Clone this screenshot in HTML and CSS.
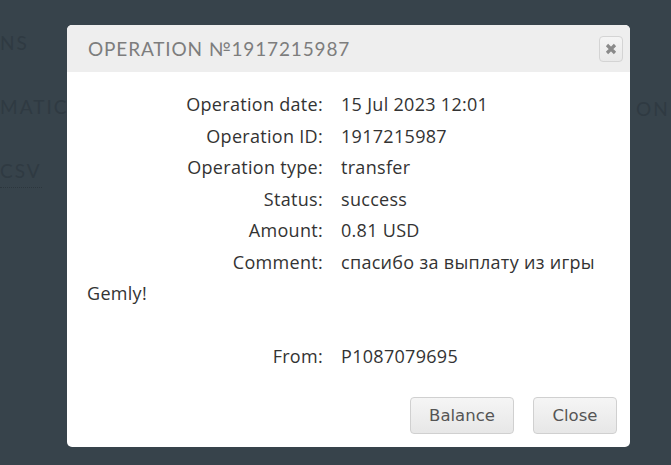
FILE: index.html
```html
<!DOCTYPE html>
<html>
<head>
<meta charset="utf-8">
<link rel="stylesheet" href="styles.css">
</head>
<body>
<div class="page">
  <div class="bg-nav">
    <div class="bg-item">NS</div>
    <div class="bg-item">MATIC</div>
    <div class="bg-item"><span class="bg-csv">CSV</span></div>
  </div>
  <div class="bg-right">ON</div>

  <div class="modal">
    <div class="modal-header">
      <h3 class="modal-title">OPERATION №1917215987</h3>
      <button class="close-x" aria-label="close">
        <svg width="12" height="12" viewBox="0 0 12 12"><path d="M2 2 L10 10 M10 2 L2 10" stroke="#8a8a8a" stroke-width="3.2" stroke-linecap="butt"/></svg>
      </button>
    </div>
    <div class="modal-body">
      <div class="row"><span class="label">Operation date:</span><span class="value">15 Jul 2023 12:01</span></div>
      <div class="row"><span class="label">Operation ID:</span><span class="value">1917215987</span></div>
      <div class="row"><span class="label">Operation type:</span><span class="value">transfer</span></div>
      <div class="row"><span class="label">Status:</span><span class="value">success</span></div>
      <div class="row"><span class="label">Amount:</span><span class="value">0.81 USD</span></div>
      <div class="row"><span class="label">Comment:</span>спасибо за выплату из игры Gemly!</div>
      <div class="row empty">&nbsp;</div>
      <div class="row"><span class="label">From:</span><span class="value">P1087079695</span></div>
    </div>
    <div class="modal-footer">
      <button class="btn btn-balance">Balance</button>
      <button class="btn btn-close">Close</button>
    </div>
  </div>
</div>
</body>
</html>
```

FILE: styles.css
```css
html, body {
  margin: 0;
  padding: 0;
}
body {
  background: #37434b;
  width: 671px;
  height: 465px;
  overflow: hidden;
  font-family: "Open Sans", "Liberation Sans", sans-serif;
}
.page {
  position: relative;
  width: 671px;
  height: 465px;
}
.bg-nav {
  padding-top: 33px;
  display: flex;
  flex-direction: column;
}
.bg-item {
  color: #2f3a42;
  font-family: "Lato", sans-serif;
  font-size: 19px;
  letter-spacing: 2px;
  height: 64px;
  line-height: 20px;
}
.bg-csv {
  border-bottom: 1px dotted #2c363d;
  padding-bottom: 5px;
}
.bg-right {
  position: absolute;
  left: 636px;
  top: 97px;
  color: #2f3a42;
  font-family: "Lato", sans-serif;
  font-size: 19px;
  letter-spacing: 2px;
}
.modal {
  position: absolute;
  left: 67px;
  top: 25px;
  width: 563px;
  height: 422px;
  background: #fff;
  border-radius: 5px;
  overflow: hidden;
  display: flex;
  flex-direction: column;
}
.modal-header {
  background: #eeeeee;
  height: 47px;
  display: flex;
  align-items: center;
  justify-content: space-between;
  padding: 0 7px 0 21px;
}
.modal-title {
  margin: 0;
  font-family: "Lato", sans-serif;
  font-weight: 400;
  font-size: 19px;
  letter-spacing: 0.85px;
  color: #7d7d7d;
}
.close-x {
  width: 24px;
  height: 26px;
  padding: 0;
  border: 1px solid #d4d4d4;
  border-radius: 4px;
  background: linear-gradient(#f4f4f4, #e9e9e9);
  display: flex;
  align-items: center;
  justify-content: center;
}
.modal-body {
  padding: 17px 20px 0 20px;
  color: #333;
  font-size: 18px;
  letter-spacing: 0.3px;
  line-height: 31.5px;
  flex: 1;
}
.label {
  display: inline-block;
  width: 236px;
  text-align: right;
  margin-right: 18px;
}
.modal-footer {
  display: flex;
  justify-content: flex-end;
  gap: 19px;
  padding: 0 13px 13px 0;
}
.btn {
  height: 37px;
  border: 1px solid #d0d0d0;
  border-radius: 4px;
  background: linear-gradient(#f5f5f5, #e7e7e7);
  font-family: "DejaVu Sans", sans-serif;
  font-size: 16.5px;
  color: #555;
  padding: 0;
}
.btn-balance { width: 104px; }
.btn-close { width: 84px; }
```
